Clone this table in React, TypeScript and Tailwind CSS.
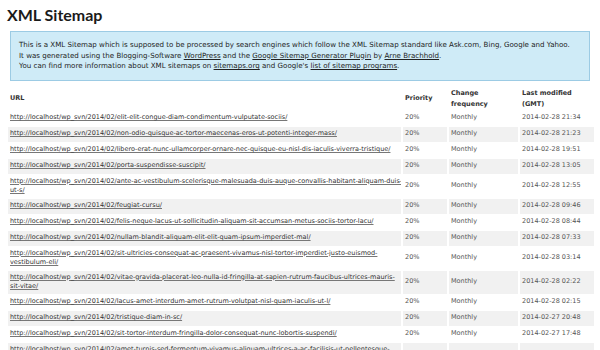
const rows: { url: string[]; date: string }[] = [
  { url: ["http://localhost/wp_svn/2014/02/elit-elit-congue-diam-condimentum-vulputate-sociis/"], date: "2014-02-28 21:34" },
  { url: ["http://localhost/wp_svn/2014/02/non-odio-quisque-ac-tortor-maecenas-eros-ut-potenti-integer-mass/"], date: "2014-02-28 21:23" },
  { url: ["http://localhost/wp_svn/2014/02/libero-erat-nunc-ullamcorper-ornare-nec-quisque-eu-nisl-dis-iaculis-viverra-tristique/"], date: "2014-02-28 19:51" },
  { url: ["http://localhost/wp_svn/2014/02/porta-suspendisse-suscipit/"], date: "2014-02-28 13:05" },
  { url: ["http://localhost/wp_svn/2014/02/ante-ac-vestibulum-scelerisque-malesuada-duis-auque-convallis-habitant-aliquam-duis-", "ut-s/"], date: "2014-02-28 12:55" },
  { url: ["http://localhost/wp_svn/2014/02/feugiat-cursu/"], date: "2014-02-28 09:46" },
  { url: ["http://localhost/wp_svn/2014/02/felis-neque-lacus-ut-sollicitudin-aliquam-sit-accumsan-metus-sociis-tortor-lacu/"], date: "2014-02-28 08:44" },
  { url: ["http://localhost/wp_svn/2014/02/nullam-blandit-aliquam-elit-elit-quam-ipsum-imperdiet-mal/"], date: "2014-02-28 07:33" },
  { url: ["http://localhost/wp_svn/2014/02/sit-ultricies-consequat-ac-praesent-vivamus-nisl-tortor-imperdiet-justo-euismod-", "vestibulum-eli/"], date: "2014-02-28 03:14" },
  { url: ["http://localhost/wp_svn/2014/02/vitae-gravida-placerat-leo-nulla-id-fringilla-at-sapien-rutrum-faucibus-ultrices-mauris-", "sit-vitae/"], date: "2014-02-28 02:22" },
  { url: ["http://localhost/wp_svn/2014/02/lacus-amet-interdum-amet-rutrum-volutpat-nisl-quam-iaculis-ut-l/"], date: "2014-02-28 02:15" },
  { url: ["http://localhost/wp_svn/2014/02/tristique-diam-in-sc/"], date: "2014-02-27 20:48" },
  { url: ["http://localhost/wp_svn/2014/02/sit-tortor-interdum-fringilla-dolor-consequat-nunc-lobortis-suspendi/"], date: "2014-02-27 17:48" },
  { url: ["http://localhost/wp_svn/2014/02/amet-turpis-sed-fermentum-vivamus-aliquam-ultrices-a-ac-facilisis-ut-pellentesque-", "nunc-felis-pretium/"], date: "2014-04-23 19:04" },
];

export default function App() {
  return (
    <div className="w-[600px] h-[350px] overflow-hidden bg-white text-[#333] font-['DejaVu_Sans',sans-serif]">
      <h1 className="pt-[5px] pl-[7px] text-[16px] leading-[19px] font-bold text-[#1a1a1a] font-['Lato',sans-serif]">
        XML Sitemap
      </h1>
      <div className="mx-[10px] mt-[7px] border border-[#9ccbe4] bg-[#cfebf7] px-[8px] py-[8px] text-[7.1px] leading-[10.5px] text-[#222]">
        <p>
          This is a XML Sitemap which is supposed to be processed by search engines which follow the XML Sitemap standard like Ask.com, Bing, Google and Yahoo.
        </p>
        <p>
          It was generated using the Blogging-Software <span className="underline">WordPress</span> and the{" "}
          <span className="underline">Google Sitemap Generator Plugin</span> by <span className="underline">Arne Brachhold</span>.
        </p>
        <p>
          You can find more information about XML sitemaps on <span className="underline">sitemaps.org</span> and Google's{" "}
          <span className="underline">list of sitemap programs</span>.
        </p>
      </div>
      <table className="mt-[6px] ml-[6px] w-[590px] table-fixed border-separate border-spacing-x-[2px] border-spacing-y-[1px] text-[6.5px]">
        <thead>
          <tr className="text-left font-bold text-[#333] leading-[11px]">
            <th className="w-[393px] px-[2px] py-0 align-middle">URL</th>
            <th className="w-[44px] px-[2px] py-0 align-middle">Priority</th>
            <th className="w-[69px] px-[2px] py-0 align-middle">
              Change
              <br />
              frequency
            </th>
            <th className="w-[74px] px-[2px] py-0 align-middle">
              Last modified
              <br />
              (GMT)
            </th>
          </tr>
        </thead>
        <tbody>
          {rows.map((r, i) => {
            const bg = i % 2 === 1 ? "bg-[#f1f1f1]" : "bg-white";
            return (
              <tr key={i}>
                <td className={`${bg} h-[15px] px-[2px] py-[2px] align-middle leading-[9.5px] whitespace-nowrap overflow-hidden`}>
                  {r.url.map((l, j) => (
                    <div key={j} className="text-[#333] underline decoration-[#777]">
                      {l}
                    </div>
                  ))}
                </td>
                <td className={`${bg} h-[15px] px-[2px] py-[2px] align-middle leading-[9.5px] text-[#555]`}>20%</td>
                <td className={`${bg} h-[15px] px-[2px] py-[2px] align-middle leading-[9.5px] text-[#555]`}>Monthly</td>
                <td className={`${bg} h-[15px] px-[2px] py-[2px] align-middle leading-[9.5px] text-[#555] whitespace-nowrap`}>{r.date}</td>
              </tr>
            );
          })}
        </tbody>
      </table>
    </div>
  );
}
